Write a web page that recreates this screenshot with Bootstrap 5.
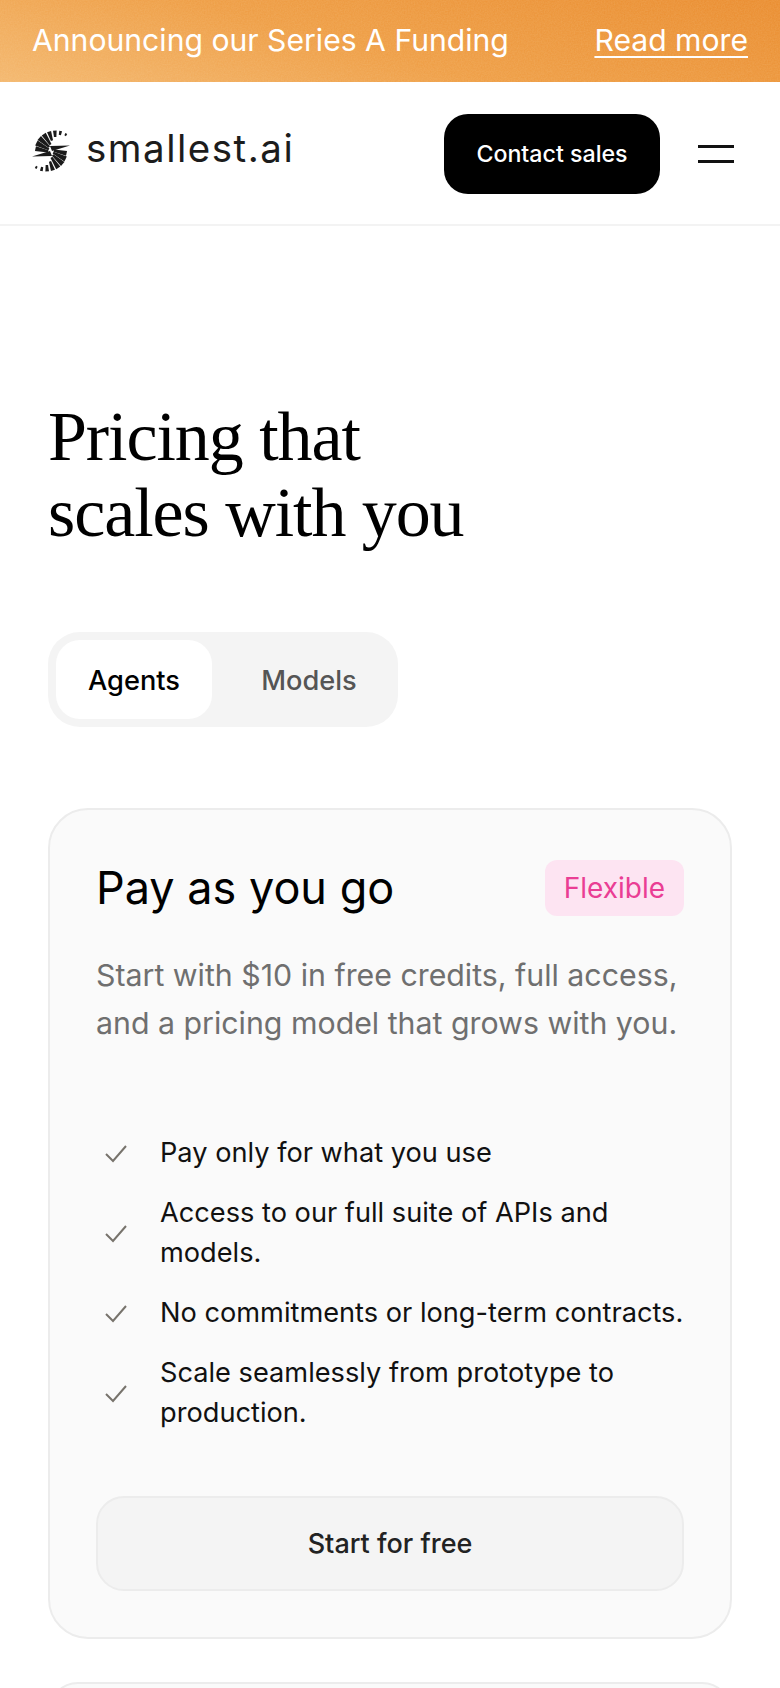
<!DOCTYPE html>
<html lang="en">
<head>
    <meta charset="UTF-8">
    <meta name="viewport" content="width=device-width, initial-scale=1.0">
    <title>Pricing - smallest.ai</title>

    <link rel="stylesheet" href="https://cdn.jsdelivr.net/npm/bootstrap@5.3.0/dist/css/bootstrap.min.css">

    <style>
        body {
            font-family: Inter, "Liberation Sans", sans-serif;
            background-color: #fff;
            color: #000;
        }

        .promo-bar {
            height: 82px;
            padding: 0 32px;
            font-size: 30.15px;
            background:
                url("data:image/svg+xml,%3Csvg xmlns='http://www.w3.org/2000/svg' width='200' height='82'%3E%3Cfilter id='n'%3E%3CfeTurbulence type='fractalNoise' baseFrequency='.7' numOctaves='2'/%3E%3CfeColorMatrix values='0 0 0 0 1 0 0 0 0 .85 0 0 0 0 .6 0 0 0 .5 0'/%3E%3C/filter%3E%3Crect width='200' height='82' filter='url(%23n)' opacity='.35'/%3E%3C/svg%3E"),
                linear-gradient(15deg, #f3b66c 0%, #ee9c42 45%, #e98a2b 100%);
        }

        .promo-bar a {
            text-underline-offset: 5px;
            text-decoration-thickness: 2px;
        }

        .site-header {
            height: 144px;
            padding: 0 46px 0 32px;
            border-bottom: 2px solid #f3f3f3;
        }

        .brand-logo {
            flex: none;
            margin-bottom: 4px;
        }

        .brand-name {
            font-size: 38.5px;
            line-height: 1;
            letter-spacing: 1.5px;
            color: #1c1c1c;
            margin: 0 auto 9px 16px;
        }

        .btn-contact {
            width: 216px;
            height: 80px;
            margin: 2px 38px 0 0;
            font-size: 23.2px;
            font-weight: 500;
            border-radius: 24px;
            background: #000;
            color: #fff;
        }

        .menu-lines {
            width: 36px;
            height: 18px;
            margin-top: 2px;
            border-top: 3px solid #111;
            border-bottom: 3px solid #111;
        }

        .page-body {
            padding: 0 48px;
        }

        .page-title {
            margin: 173px 0 0;
            font-family: "Liberation Serif", serif;
            font-size: 70px;
            line-height: 76px;
            letter-spacing: -1.07px;
            color: #000;
        }

        .plan-tabs {
            width: 350px;
            height: 95px;
            margin-top: 81px;
            padding: 8px;
            border-radius: 32px;
            background: #f4f4f4;
        }

        .plan-tab {
            height: 79px;
            padding-top: 3px;
            font-size: 27.2px;
            font-weight: 500;
            color: #555;
            border-radius: 24px;
        }

        .plan-tab.active-tab {
            width: 156px;
            background: #fff;
            color: #000;
        }

        .tab-idle {
            padding-left: 16px;
        }

        .plan-box {
            margin-top: 81px;
            padding: 50px 46px 46px;
            border: 2px solid #ececec;
            border-radius: 40px;
            background: #fafafa;
        }

        .plan-title {
            font-size: 45px;
            font-weight: 400;
            line-height: 56px;
            margin: 0;
        }

        .plan-tag {
            padding: 0 19px;
            height: 56px;
            font-size: 28px;
            color: #ea3d94;
            background: #fde4f2;
            border-radius: 12px;
        }

        .plan-desc {
            margin: 35px 0 0;
            font-size: 30.3px;
            line-height: 48px;
            color: #6f6f6f;
        }

        .feature-list {
            margin: 86px 0 0;
            padding: 0;
            list-style: none;
            font-size: 27.2px;
            line-height: 40px;
            color: #111;
        }

        .feature-list li {
            margin-bottom: 20px;
        }

        .feature-list svg {
            flex: none;
            width: 24px;
            height: 24px;
            margin: 0 32px 0 8px;
        }

        .btn-start {
            height: 95px;
            margin-top: 63px;
            padding-top: 8px;
            font-size: 27px;
            font-weight: 500;
            color: #222;
            background: #f4f4f4;
            border: 2px solid #ececec;
            border-radius: 28px;
        }

        .plan-box-next {
            margin-top: 43px;
            height: 60px;
            padding: 0;
        }
    </style>
</head>
<body class="overflow-hidden">

    <!-- Banner -->
    <div class="promo-bar d-flex align-items-center justify-content-between text-white">
        <span>Announcing our Series A Funding</span>
        <a href="#" class="text-white">Read more</a>
    </div>

    <!-- Header -->
    <header class="site-header d-flex align-items-center">
        <svg class="brand-logo" width="38" height="42" viewBox="0 0 38 42" fill="#1a1a1a">
            <g id="logo-half">
                <path transform="translate(24 23) rotate(12)" d="M-8-1.100-21-2.500V2.500L-8 1.100z"/>
                <path transform="translate(24 23) rotate(27)" d="M-8-1.100-22-2.700V2.700L-8 1.100z"/>
                <path transform="translate(24 23) rotate(42)" d="M-9-1.100-22.500-2.600V2.600L-9 1.100z"/>
                <path transform="translate(24 23) rotate(57)" d="M-10-1.100-22.500-2.400V2.400L-10 1.100z"/>
                <path transform="translate(24 23) rotate(72)" d="M-13-1.100-22.500-2.100V2.100L-13 1.100z"/>
                <path transform="translate(24 23) rotate(87)" d="M-16-1.200-22.500-1.800V1.800L-16 1.200z"/>
                <path transform="translate(24 23) rotate(102)" d="M-18.500-1.100-22.500-1.400V1.400L-18.500 1.100z"/>
                <path transform="translate(24 23) rotate(118)" d="M-19.500-.9-22-1V1L-19.500 .9z"/>
                <path d="M0 26.500 18 21l2 5z"/>
            </g>
            <use href="#logo-half" transform="rotate(180 19 21)"/>
        </svg>
        <span class="brand-name">smallest.ai</span>
        <button type="button" class="btn btn-contact d-flex align-items-center justify-content-center">Contact sales</button>
        <div class="menu-lines"></div>
    </header>

    <main class="page-body">
        <h1 class="page-title">Pricing that<br>scales with you</h1>

        <!-- Tabs -->
        <div class="plan-tabs d-flex align-items-center">
            <div class="plan-tab active-tab d-flex align-items-center justify-content-center">Agents</div>
            <div class="plan-tab tab-idle flex-grow-1 d-flex align-items-center justify-content-center">Models</div>
        </div>

        <!-- Plan -->
        <section class="plan-box">
            <div class="d-flex align-items-center justify-content-between">
                <h2 class="plan-title">Pay as you go</h2>
                <span class="plan-tag d-flex align-items-center">Flexible</span>
            </div>
            <p class="plan-desc">Start with $10 in free credits, full access, and a pricing model that grows with you.</p>

            <ul class="feature-list">
                <li class="d-flex align-items-center">
                    <svg viewBox="0 0 24 24" fill="none" stroke="#77736c" stroke-width="2"><path d="M2 13l7 7L22 5"/></svg>
                    <span>Pay only for what you use</span>
                </li>
                <li class="d-flex align-items-center">
                    <svg viewBox="0 0 24 24" fill="none" stroke="#77736c" stroke-width="2"><path d="M2 13l7 7L22 5"/></svg>
                    <span>Access to our full suite of APIs and models.</span>
                </li>
                <li class="d-flex align-items-center">
                    <svg viewBox="0 0 24 24" fill="none" stroke="#77736c" stroke-width="2"><path d="M2 13l7 7L22 5"/></svg>
                    <span>No commitments or long-term contracts.</span>
                </li>
                <li class="d-flex align-items-center">
                    <svg viewBox="0 0 24 24" fill="none" stroke="#77736c" stroke-width="2"><path d="M2 13l7 7L22 5"/></svg>
                    <span>Scale seamlessly from prototype to production.</span>
                </li>
            </ul>

            <button type="button" class="btn btn-start w-100 d-flex align-items-center justify-content-center">Start for free</button>
        </section>

        <section class="plan-box plan-box-next"></section>
    </main>

    <script src="https://cdn.jsdelivr.net/npm/bootstrap@5.3.0/dist/js/bootstrap.bundle.min.js"></script>
</body>
</html>
